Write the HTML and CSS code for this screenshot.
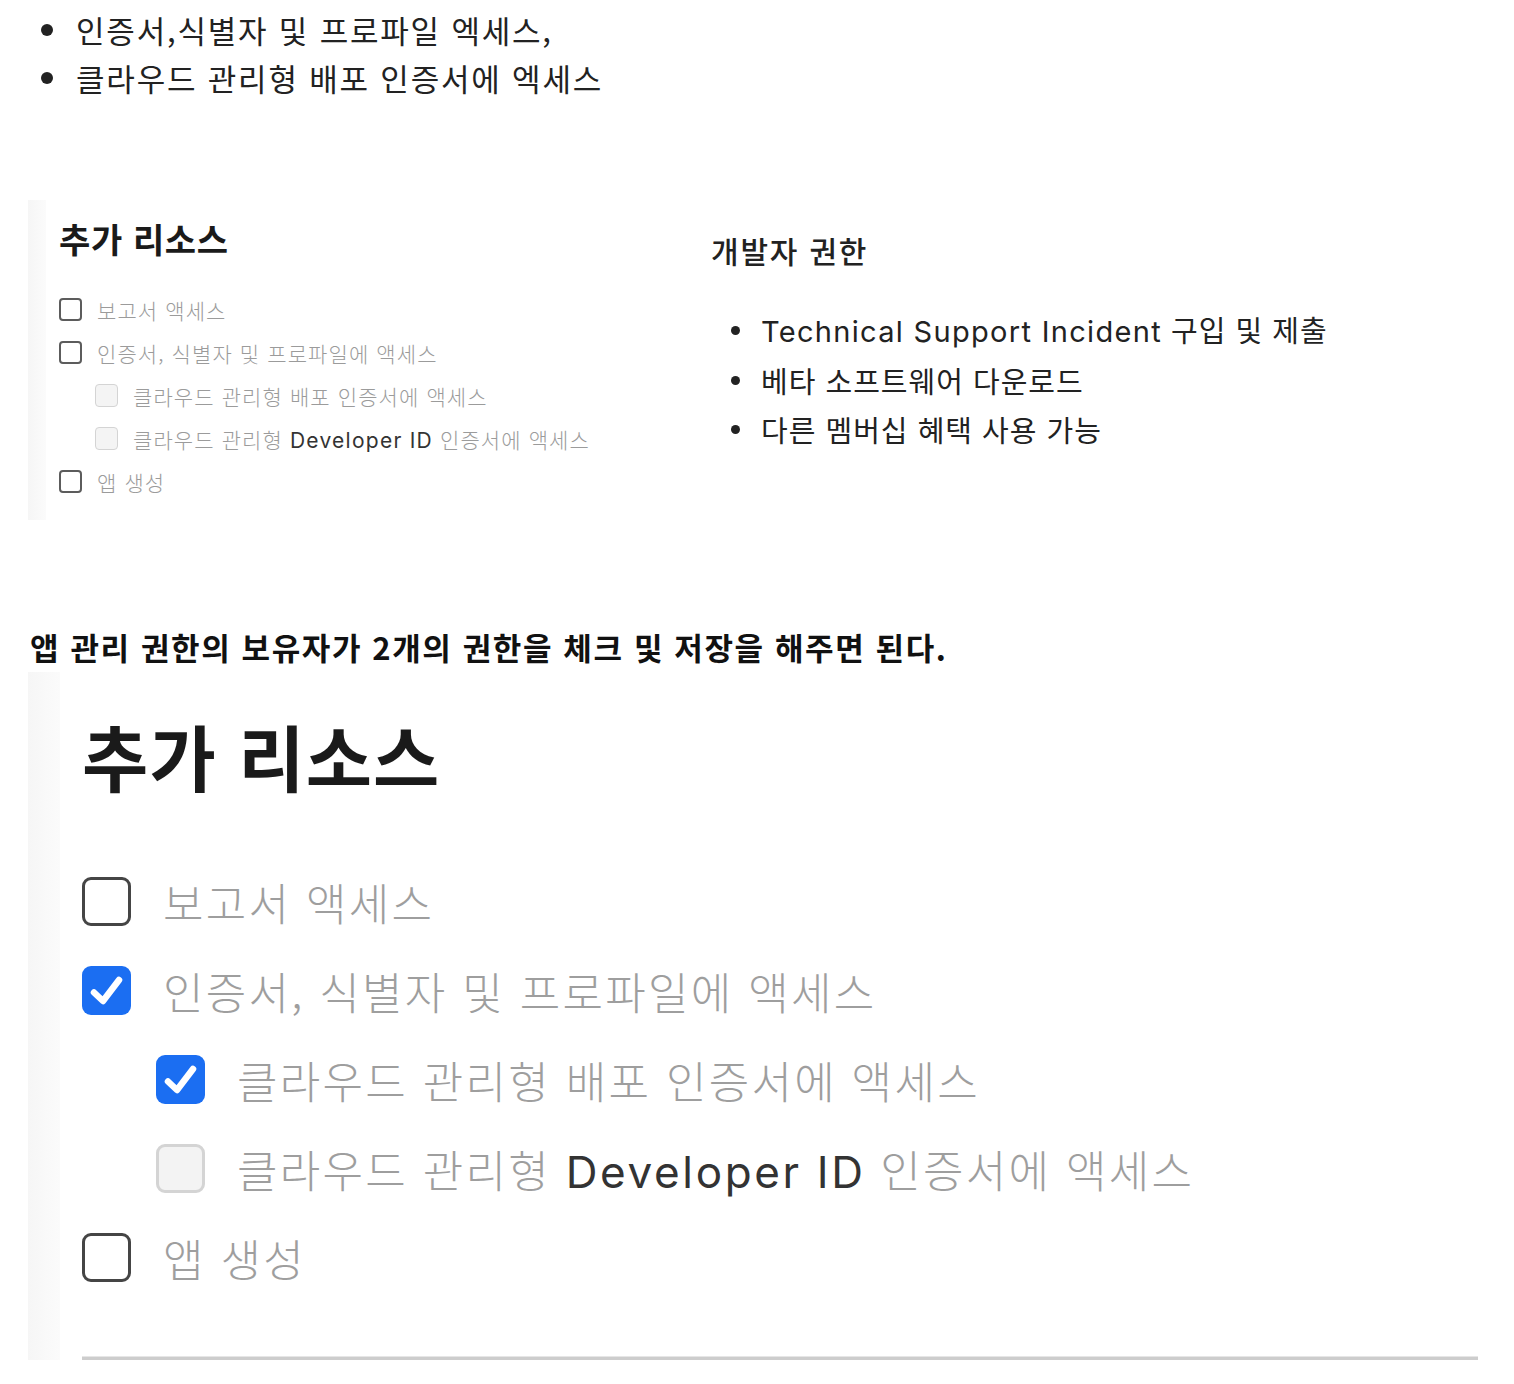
FILE: index.html
```html
<!DOCTYPE html>
<html lang="ko">
<head>
<meta charset="utf-8">
<title>권한</title>
<link rel="stylesheet" href="styles.css">
</head>
<body>
<ul class="bullets">
  <li><span>인증서,식별자 및 프로파일 엑세스,</span></li>
  <li><span>클라우드 관리형 배포 인증서에 엑세스</span></li>
</ul>

<div class="shot1">
  <div class="strip1"></div>
  <div class="res">
    <h2>추가 리소스</h2>
    <div class="res-list">
      <div class="row"><span class="cb"></span><span>보고서 액세스</span></div>
      <div class="row"><span class="cb"></span><span>인증서, 식별자 및 프로파일에 액세스</span></div>
      <div class="row sub"><span class="cb dis"></span><span>클라우드 관리형 배포 인증서에 액세스</span></div>
      <div class="row sub"><span class="cb dis"></span><span>클라우드 관리형 <span class="latin">Developer ID</span> 인증서에 액세스</span></div>
      <div class="row"><span class="cb"></span><span>앱 생성</span></div>
    </div>
  </div>
  <div class="dev">
    <h3>개발자 권한</h3>
    <ul class="dev-list">
      <li><span><span class="latin2">Technical Support Incident</span> 구입 및 제출</span></li>
      <li><span>베타 소프트웨어 다운로드</span></li>
      <li><span>다른 멤버십 혜택 사용 가능</span></li>
    </ul>
  </div>
</div>

<p class="note">앱 관리 권한의 보유자가 2개의 권한을 체크 및 저장을 해주면 된다.</p>

<div class="shot2">
  <div class="strip2"></div>
  <div class="res2">
    <h2>추가 리소스</h2>
    <div class="res2-list">
      <div class="row2"><span class="cb2"></span><span>보고서 액세스</span></div>
      <div class="row2"><span class="cb2 on"><svg viewBox="0 0 48 48" width="48" height="48"><path d="M11 25.5 L20 34 L36 13" fill="none" stroke="#fff" stroke-width="6.5" stroke-linecap="round" stroke-linejoin="round"/></svg></span><span>인증서, 식별자 및 프로파일에 액세스</span></div>
      <div class="row2 sub2"><span class="cb2 on"><svg viewBox="0 0 48 48" width="48" height="48"><path d="M11 25.5 L20 34 L36 13" fill="none" stroke="#fff" stroke-width="6.5" stroke-linecap="round" stroke-linejoin="round"/></svg></span><span>클라우드 관리형 배포 인증서에 액세스</span></div>
      <div class="row2 sub2"><span class="cb2 dis"></span><span>클라우드 관리형 <span class="latin">Developer ID</span> 인증서에 액세스</span></div>
      <div class="row2"><span class="cb2"></span><span>앱 생성</span></div>
    </div>
    <div class="rule"></div>
  </div>
</div>
</body>
</html>
```

FILE: styles.css
```css
body {
  margin: 0;
  background: #fff;
  color: #222;
  font-family: "Noto Sans CJK KR", "Noto Sans", sans-serif;
}

.bullets {
  list-style: none;
  margin: 0;
  padding: 6px 0 0 41px;
}
.bullets li {
  display: flex;
  align-items: center;
  height: 48px;
  font-size: 31px;
  line-height: 48px;
  letter-spacing: 1.8px;
  color: #222;
}
.bullets li::before {
  content: "";
  flex: none;
  width: 12px;
  height: 12px;
  border-radius: 50%;
  background: #222;
  margin-right: 23px;
}

/* first screenshot */
.shot1 {
  display: flex;
  margin: 98px 0 0 28px;
  height: 320px;
}
.strip1 {
  width: 18px;
  background: linear-gradient(to right, #f6f6f6, #fbfbfb);
}
.res {
  width: 652px;
  padding: 19px 0 0 13px;
}
.res h2 {
  margin: 0;
  font-size: 34px;
  line-height: 40px;
  font-weight: 700;
  letter-spacing: 0.6px;
  color: #1a1a1a;
}
.res-list {
  margin-top: 29px;
}
.row {
  display: flex;
  align-items: center;
  height: 43px;
  font-size: 21px;
  font-weight: 300;
  letter-spacing: 1.1px;
  color: #9b9b9b;
  white-space: nowrap;
}
.row.sub {
  padding-left: 36px;
}
.cb {
  flex: none;
  box-sizing: border-box;
  width: 23px;
  height: 23px;
  border: 2px solid #5c5c5c;
  border-radius: 4px;
  margin-right: 15px;
}
.cb.dis {
  border: 1.5px solid #d4d4d4;
  background: #f4f4f4;
}
.latin {
  font-family: Inter, "Noto Sans CJK KR", sans-serif;
  color: #333;
  font-weight: 400;
  letter-spacing: 0.06em;
}

.dev {
  padding-top: 30px;
}
.dev h3 {
  margin: 0;
  font-size: 30px;
  line-height: 40px;
  font-weight: 500;
  letter-spacing: 1.8px;
  color: #222;
}
.dev-list {
  list-style: none;
  margin: 36px 0 0;
  padding: 0 0 0 20px;
}
.dev-list li {
  display: flex;
  align-items: center;
  height: 49.5px;
  font-size: 29px;
  line-height: 49.5px;
  letter-spacing: 1px;
  color: #222;
  white-space: nowrap;
}
.dev-list li::before {
  content: "";
  flex: none;
  width: 9px;
  height: 9px;
  border-radius: 50%;
  background: #222;
  margin-right: 21px;
}
.latin2 {
  font-family: Inter, "Noto Sans CJK KR", sans-serif;
  letter-spacing: 0.045em;
}

.note {
  margin: 107px 0 0 30px;
  font-size: 31px;
  line-height: 40px;
  font-weight: 700;
  letter-spacing: 1.6px;
  color: #111;
}

/* second screenshot */
.shot2 {
  display: flex;
  margin: 5px 0 0 28px;
  height: 688px;
}
.strip2 {
  width: 32px;
  background: linear-gradient(to right, #f6f6f6, #fbfbfb);
}
.res2 {
  width: 1396px;
  padding: 43px 0 0 22px;
  display: flex;
  flex-direction: column;
}
.res2 h2 {
  margin: 0;
  font-size: 72px;
  line-height: 80px;
  font-weight: 700;
  letter-spacing: 1.2px;
  color: #1a1a1a;
}
.res2-list {
  margin-top: 62px;
}
.row2 {
  display: flex;
  align-items: center;
  height: 89px;
  font-size: 44px;
  font-weight: 300;
  letter-spacing: 2.3px;
  color: #9e9e9e;
  white-space: nowrap;
}
.row2.sub2 {
  padding-left: 74px;
}
.cb2 {
  flex: none;
  box-sizing: border-box;
  width: 49px;
  height: 49px;
  border: 3.5px solid #454545;
  border-radius: 9px;
  margin-right: 32px;
  display: flex;
  align-items: center;
  justify-content: center;
}
.cb2.on {
  border: none;
  background: #1b6ef2;
}
.cb2.dis {
  border: 3px solid #d4d4d4;
  background: #f3f3f3;
}
.rule {
  margin-top: auto;
  height: 3px;
  border-top: 1px solid #e6e6e6;
  background: #cdcdcd;
}
```
